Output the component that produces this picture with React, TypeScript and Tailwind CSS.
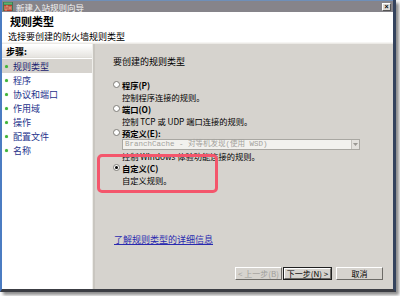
const cjk = { fontFamily: '"Noto Sans CJK SC", "Liberation Sans", sans-serif' };

const steps = ['规则类型', '程序', '协议和端口', '作用域', '操作', '配置文件', '名称'];

function Radio({ checked }: { checked?: boolean }) {
  return (
    <span className="mt-[2px] w-[7px] h-[7px] rounded-full bg-white border border-[#7f7d78] flex items-center justify-center shrink-0">
      {checked && <span className="w-[3px] h-[3px] rounded-full bg-black" />}
    </span>
  );
}

function Option({ label, desc, checked }: { label: string; desc: string; checked?: boolean }) {
  return (
    <div className="flex items-start gap-[2px]">
      <Radio checked={checked} />
      <div className="text-black text-[8.25px] leading-[12px]">
        <div className="font-bold">{label}</div>
        <div>{desc}</div>
      </div>
    </div>
  );
}

function Btn({ children, disabled, primary, w }: { children: string; disabled?: boolean; primary?: boolean; w: string }) {
  return (
    <div className={`h-[13px] flex ${w} ${primary ? 'border border-[#202020]' : ''}`}>
      <div
        className={`flex-1 flex items-center justify-center whitespace-nowrap text-[8px] bg-[#d6d3ce] border border-t-white border-l-white border-r-[#6d6b67] border-b-[#6d6b67] ${
          disabled ? 'text-[#a09e9a]' : 'text-black'
        }`}
      >
        {children}
      </div>
    </div>
  );
}

export default function App() {
  return (
    <div className="w-[400px] h-[296px] bg-white relative overflow-hidden text-[9px] leading-[11px]" style={cjk}>
      <div className="w-[396px] h-[292px] flex flex-col border-l-2 border-l-[#4b7cc2] border-r-[3px] border-r-[#34435e] border-b-[3px] border-b-[#3c3e44] shadow-[3px_3px_3px_rgba(0,0,0,0.45)]">
        {/* title bar */}
        <div className="h-[12px] bg-[#86848a] border-t border-t-[#6f8fb8] flex items-center pl-[1px] pr-[2px] shrink-0">
          <svg width="10" height="9" viewBox="0 0 10 9" className="shrink-0">
            <rect x="0" y="0" width="10" height="9" fill="#3a7a5a" />
            <rect x="1" y="3" width="8" height="6" fill="#b8402c" />
            <path d="M1 5h8M1 7h8M4 3v2M7 5v2M3 7v2" stroke="#e8c0a0" strokeWidth="0.7" />
            <rect x="1" y="0.5" width="8" height="2" fill="#5fb06a" />
          </svg>
          <span className="ml-[3px] text-[#f4f4f4] text-[8.5px] leading-[10px]">新建入站规则向导</span>
          <div className="ml-auto w-[9px] h-[8px] bg-[#dcdad6] border border-t-white border-l-white border-r-[#555] border-b-[#555] flex items-center justify-center text-[7px] leading-none font-bold text-black" style={{ fontFamily: '"Liberation Sans", sans-serif' }}>
            ×
          </div>
        </div>
        {/* header */}
        <div className="h-[30px] bg-white shrink-0 pl-[6px]">
          <div className="pt-[3px] pl-[2px] font-bold text-[11px] leading-[13px] text-black">规则类型</div>
          <div className="mt-[3px] text-black">选择要创建的防火墙规则类型</div>
        </div>
        <div className="h-[2px] bg-[#eceae6] border-t border-t-[#f6f5f3] shrink-0" />
        {/* body */}
        <div className="flex-1 flex min-h-0">
          <div className="w-[90px] bg-white flex flex-col shrink-0">
            <div className="h-[13px] mt-[1px] bg-gradient-to-b from-white to-[#e6e4e0] border-b border-b-[#e0ded9] flex items-center pl-[4px] font-bold text-black">
              步骤:
            </div>
            {steps.map((s, i) => (
              <div
                key={s}
                className={`h-[14px] flex items-center pl-[3px] ${i === 0 ? 'bg-[#d6d3ce] mt-[1px]' : ''} text-[#26338c]`}
              >
                <span className="w-[3px] h-[3px] rounded-full bg-[#3fb23a] shadow-[0_0_1px_#7ad070] mr-[5px]" />
                <span className={i === 0 ? 'text-[#1a2370]' : ''}>{s}</span>
              </div>
            ))}
          </div>
          <div className="w-[1px] bg-[#efeeea]" />
          <div className="w-[2px] bg-[#c9c6c0]" />
          <div className="flex-1 bg-[#d6d3ce] flex flex-col pl-[18px] pr-[10px] pt-[12px] pb-[9px] text-black">
            <div className="h-[11px]">要创建的规则类型</div>
            <div className="mt-[12px]">
              <Option label="程序(P)" desc="控制程序连接的规则。" />
            </div>
            <Option label="端口(O)" desc="控制 TCP 或 UDP 端口连接的规则。" />
            <div className="flex items-start gap-[2px]">
              <Radio />
              <div className="text-[8.25px] leading-[12px]">
                <div className="h-[12px] font-bold">预定义(E):</div>
                <div className="w-[238px] h-[11px] bg-[#f2f1ee] border border-[#a9a7a2] flex items-center">
                  <span className="flex-1 pl-[2px] text-[#a3a19c] text-[7.5px] leading-[9px]" style={{ fontFamily: '"Liberation Mono", "Noto Sans CJK SC", monospace' }}>
                    BranchCache - 对等机发现(使用 WSD)
                  </span>
                  <span className="w-[8px] h-[9px] bg-[#e4e2de] border-l border-[#c4c2bd] flex items-center justify-center">
                    <svg width="5" height="3" viewBox="0 0 5 3">
                      <path d="M0 0h5L2.5 3z" fill="#9a9893" />
                    </svg>
                  </span>
                </div>
                <div className="h-[12px]">控制 Windows 体验功能连接的规则。</div>
              </div>
            </div>
            <Option label="自定义(C)" desc="自定义规则。" checked />
            <div className="mt-[48px] ml-[1px] text-[#2a2ab0] underline">了解规则类型的详细信息</div>
            <div className="mt-auto flex justify-end">
              <Btn disabled w="w-[47px]">&lt; 上一步(B)</Btn>
              <div className="ml-[1px]">
                <Btn primary w="w-[49px]">下一步(N) &gt;</Btn>
              </div>
              <div className="ml-[4px]">
                <Btn w="w-[47px]">取消</Btn>
              </div>
            </div>
          </div>
        </div>
      </div>
      {/* annotation highlight */}
      <div className="absolute left-[97px] top-[154px] w-[121px] h-[39px] border-[3px] border-[#f4566c] rounded-[5px]" />
    </div>
  );
}
